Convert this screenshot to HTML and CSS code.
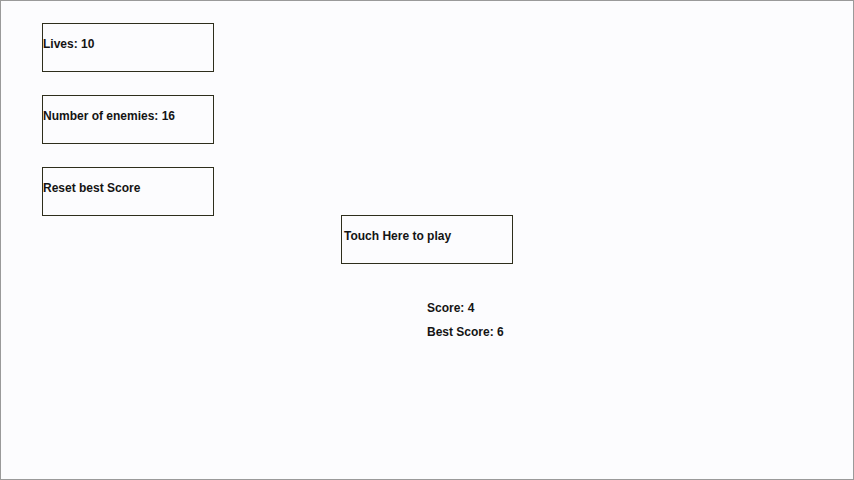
FILE: index.html
```html
<!DOCTYPE html>
<html>
<head>
<meta charset="utf-8">
<link rel="stylesheet" href="styles.css">
</head>
<body>
<div class="screen">
  <div class="menu">
    <div class="box">Lives: 10</div>
    <div class="box">Number of enemies: 16</div>
    <div class="box">Reset best Score</div>
  </div>
  <div class="play-wrap">
    <div class="box play">Touch Here to play</div>
  </div>
  <div class="scores">
    <div class="score">Score: 4</div>
    <div class="score">Best Score: 6</div>
  </div>
</div>
</body>
</html>
```

FILE: styles.css
```css
html, body {
  margin: 0;
  padding: 0;
  background: #fcfcfe;
}
.screen {
  box-sizing: border-box;
  width: 854px;
  height: 480px;
  border: 1px solid #9a9a9a;
  background: #fcfcfe;
  font-family: "Liberation Sans", Arial, sans-serif;
  font-weight: bold;
  font-size: 12px;
  color: #141414;
  display: flex;
  flex-direction: column;
}
.menu {
  display: flex;
  flex-direction: column;
  gap: 23px;
  padding: 22px 0 0 41px;
}
.box {
  box-sizing: border-box;
  width: 172px;
  height: 49px;
  border: 1px solid #2e2e1c;
  line-height: 16px;
  padding-top: 12px;
}
.play-wrap {
  display: flex;
  justify-content: center;
  margin-top: -1px;
}
.play {
  padding-left: 2px;
  padding-top: 12px;
}
.scores {
  display: flex;
  flex-direction: column;
  gap: 8px;
  padding: 36px 0 0 426px;
}
.score {
  line-height: 16px;
}
```
